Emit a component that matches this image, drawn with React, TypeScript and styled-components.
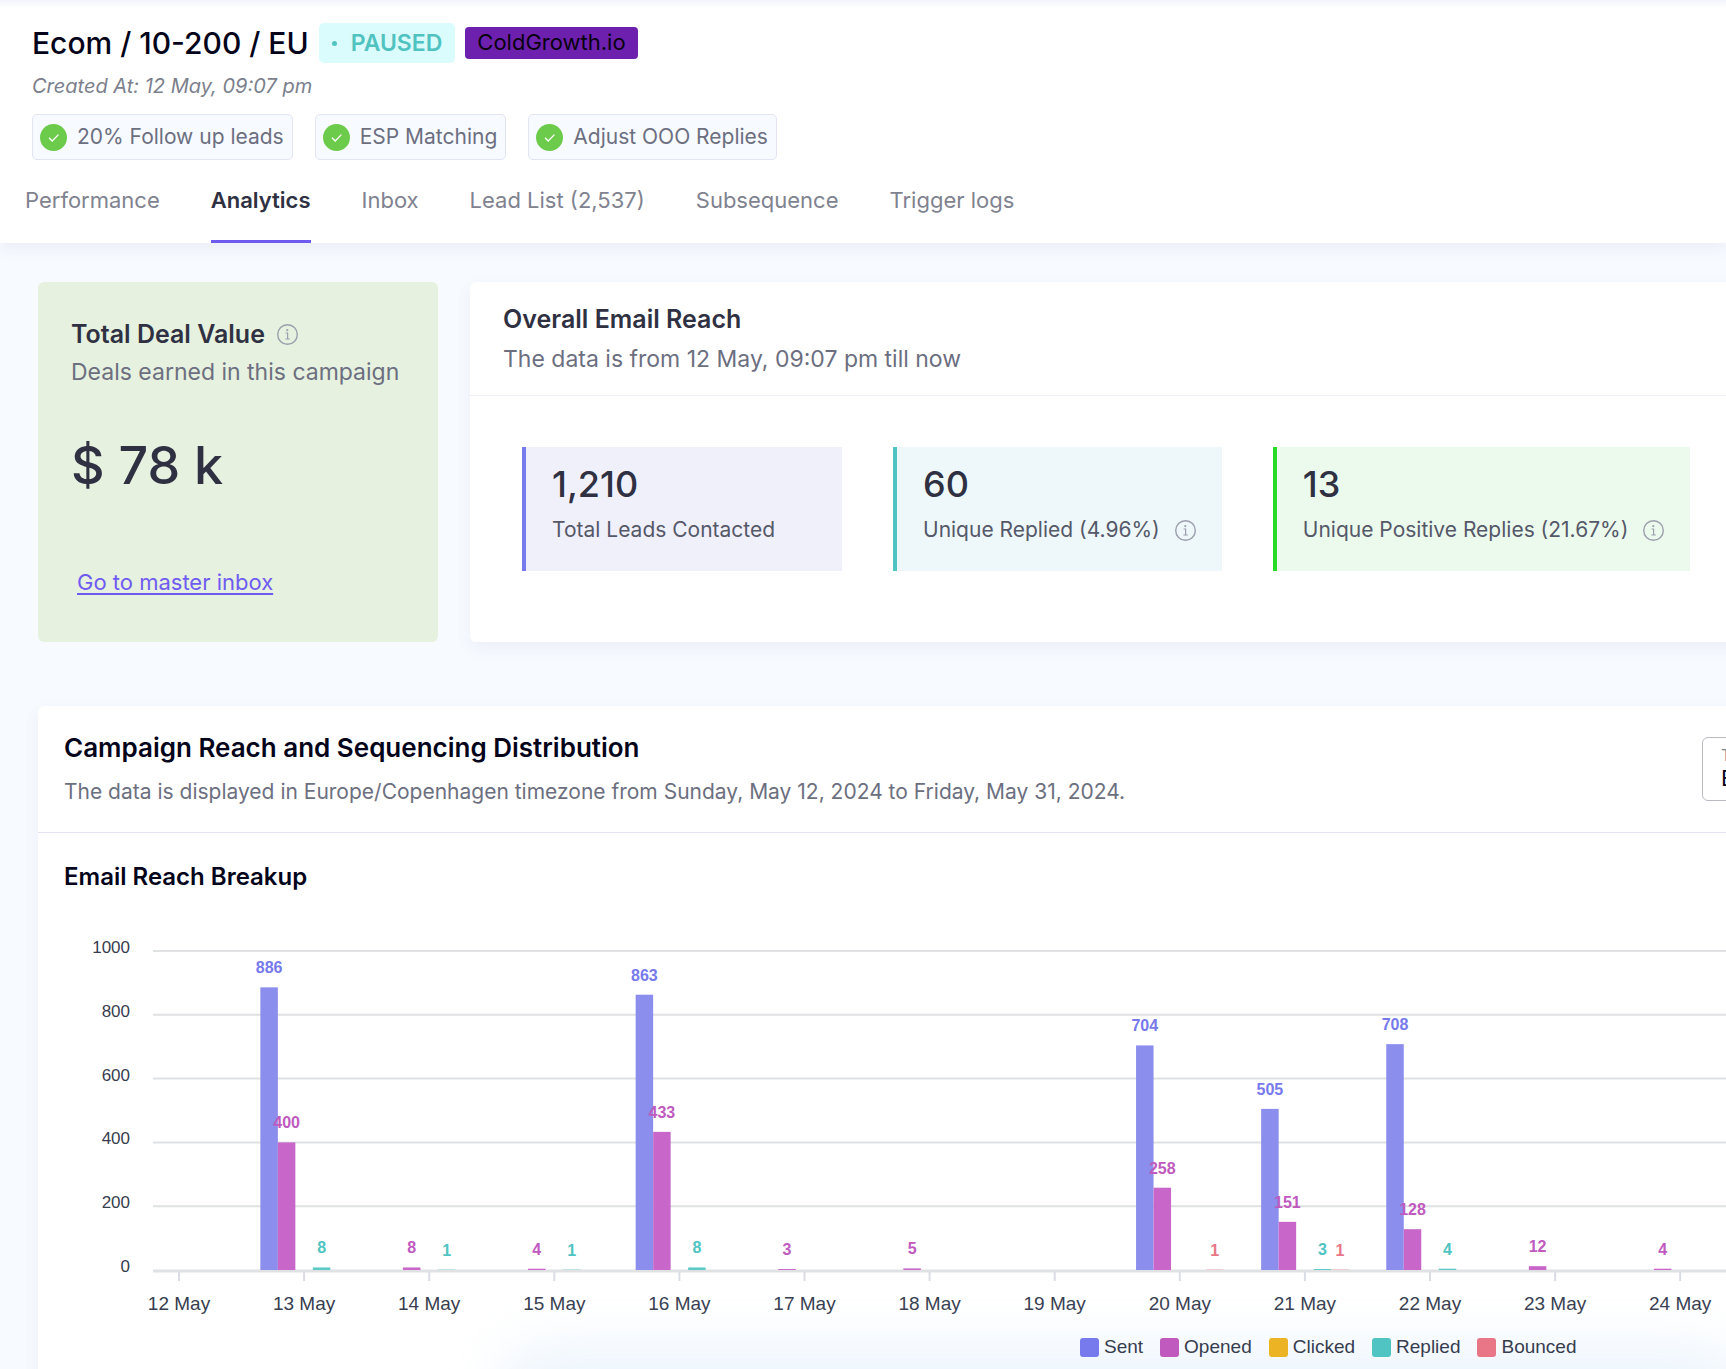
import React from 'react';
import styled, { createGlobalStyle } from 'styled-components';

const ink = '#2f3142';
const muted = '#6c6f80';
const accent = '#6f5bf0';

const GlobalStyle = createGlobalStyle`
  *, *::before, *::after { box-sizing: border-box; }
  body {
    margin: 0;
    background: #f7faff;
    color: ${ink};
    font-family: Inter, 'Liberation Sans', sans-serif;
    font-size: 22px;
    line-height: 28px;
  }
  h1, h2, h3, p, ul { margin: 0; padding: 0; }
`;

const Page = styled.div`
  position: relative;
  height: 100vh;
  overflow: hidden;
`;

/* ---------- header ---------- */

const Header = styled.header`
  background: linear-gradient(#f3f4fa, #fff 8px);
  padding: 23px 32px 0;
  box-shadow: 0 6px 14px rgba(50, 50, 80, 0.06);
`;

const TitleRow = styled.div`
  display: flex;
  align-items: center;
  height: 40px;
`;

const CampaignName = styled.h1`
  font-size: 30px;
  font-weight: 500;
  line-height: 40px;
  color: #04041a;
  margin-right: 10px;
`;

const Status = styled.span`
  display: inline-flex;
  align-items: center;
  gap: 14px;
  height: 40px;
  padding: 0 13px;
  border-radius: 5px;
  background: #dbfcfc;
  color: #50c3c1;
  font-size: 23px;
  font-weight: 600;
  margin-right: 10px;

  &::before {
    content: '';
    width: 5px;
    height: 5px;
    border-radius: 50%;
    background: currentColor;
  }
`;

const Tag = styled.span`
  height: 32px;
  line-height: 31px;
  padding: 0 12px;
  border-radius: 4px;
  background: #6d1fae;
  color: #08020f;
`;

const Created = styled.p`
  margin-top: 10px;
  font-size: 20px;
  line-height: 26px;
  font-style: italic;
  color: #7c7f8c;
`;

const Chips = styled.ul`
  display: flex;
  gap: 22px;
  margin-top: 15px;
  list-style: none;
`;

const Chip = styled.li`
  display: flex;
  align-items: center;
  gap: 10px;
  height: 46px;
  padding: 0 8px 0 7px;
  border: 1px solid #e3e4f3;
  border-radius: 5px;
  background: #f7faff;
  font-size: 21px;
  color: ${muted};
`;

const Tabs = styled.nav`
  display: flex;
  gap: 51px;
  margin: 26px 0 0 -7px;
`;

const Tab = styled.button<{ $active?: boolean }>`
  padding: 0 0 26px;
  border: 0;
  border-bottom: 3px solid ${p => (p.$active ? accent : 'transparent')};
  background: none;
  font: inherit;
  font-weight: ${p => (p.$active ? 600 : 400)};
  color: ${p => (p.$active ? ink : '#7f828f')};
  cursor: pointer;
`;

/* ---------- content ---------- */

const Content = styled.main`
  width: calc(100% + 240px);
  padding: 39px 38px;
`;

const Overview = styled.div`
  display: flex;
  gap: 32px;
  margin-bottom: 64px;
`;

const DealCard = styled.section`
  flex: none;
  width: 400px;
  padding: 36px 34px 46px 33px;
  border-radius: 6px;
  background: #e6f1df;
`;

const CardTitle = styled.h2`
  display: flex;
  align-items: center;
  gap: 12px;
  font-size: 25px;
  font-weight: 600;
  line-height: 32px;
`;

const DealNote = styled.p`
  margin-top: 6px;
  line-height: 32px;
  font-size: 23px;
  color: ${muted};
`;

const DealValue = styled.p`
  margin-top: 48px;
  font-size: 52px;
  font-weight: 500;
  line-height: 60px;
`;

const InboxLink = styled.a`
  display: inline-block;
  margin: 72px 0 0 6px;
  color: ${accent};
  text-decoration: underline;
  text-decoration-thickness: 2px;
  text-underline-offset: 3px;
`;

const Card = styled.section`
  flex: 1;
  min-width: 0;
  border-radius: 6px;
  background: #fff;
  box-shadow: 0 6px 18px rgba(50, 50, 80, 0.06);
`;

const ReachHead = styled.div`
  padding: 21px 33px 22px;
  border-bottom: 1px solid #eff0f6;
`;

const ReachNote = styled.p`
  margin-top: 10px;
  font-size: 23px;
  color: ${muted};
`;

const Stats = styled.div`
  display: flex;
  gap: 51px;
  padding: 51px 52px;
`;

const Stat = styled.div<{ $line: string; $fill: string }>`
  min-width: 320px;
  padding: 15px 26px 27px;
  border-left: 4px solid ${p => p.$line};
  background: ${p => p.$fill};
`;

const StatValue = styled.p`
  font-size: 36px;
  font-weight: 500;
  line-height: 44px;
`;

const StatLabel = styled.p`
  display: flex;
  align-items: center;
  gap: 15px;
  margin-top: 10px;
  font-size: 21px;
  color: #555869;
  white-space: nowrap;
`;

const SectionHead = styled.div`
  display: flex;
  align-items: center;
  justify-content: space-between;
  padding: 26px 26px;
  border-bottom: 1px solid #e4e4f2;
`;

const SectionTitle = styled.h2`
  font-size: 26px;
  font-weight: 600;
  line-height: 32px;
  color: #04041a;
`;

const SectionNote = styled.p`
  margin-top: 14px;
  font-size: 21px;
  color: ${muted};
`;

const Field = styled.div`
  display: flex;
  flex-direction: column;
  width: 200px;
  height: 64px;
  padding: 8px 18px;
  border: 1px solid #b9bac2;
  border-radius: 6px;
`;

const FieldLabel = styled.label`
  font-size: 16px;
  line-height: 18px;
  color: #7f828f;
`;

const FieldSelect = styled.select`
  appearance: none;
  padding: 0;
  border: 0;
  background: none;
  font: inherit;
  line-height: 28px;
  color: #04041a;
`;

const ChartTitle = styled.h3`
  padding: 29px 26px 0;
  font-size: 24px;
  font-weight: 600;
  line-height: 30px;
  color: #04041a;
`;

const Plot = styled.svg`
  display: block;
  width: 100%;
  height: 433px;
  font-family: 'Liberation Sans', sans-serif;
`;

const AxisText = styled.text<{ $size: number }>`
  font-size: ${p => p.$size}px;
  fill: #373d4f;
`;

const ValueText = styled.text`
  font-size: 16px;
  font-weight: 700;
`;

const Legend = styled.ul`
  position: relative;
  z-index: 1;
  display: flex;
  gap: 17px;
  margin: 0;
  padding: 11px 0 60px 1042px;
  list-style: none;
  font: 19px/22px 'Liberation Sans', sans-serif;
  color: #373d4f;
`;

const LegendItem = styled.li<{ $color: string }>`
  display: flex;
  align-items: center;
  gap: 5px;

  &::before {
    content: '';
    width: 19px;
    height: 19px;
    border-radius: 3px;
    background: ${p => p.$color};
  }
`;

const BottomGlow = styled.div`
  position: absolute;
  left: 520px;
  right: 0;
  bottom: -60px;
  height: 60px;
  border-radius: 30px;
  box-shadow: 0 0 50px 24px rgba(215, 232, 250, 0.45);
  pointer-events: none;
`;

const CheckIcon = () => (
  <svg width="27" height="27" viewBox="0 0 27 27" aria-hidden="true">
    <circle cx="13.5" cy="13.5" r="13.5" fill="#6ccb4b" />
    <path d="M9 13.8l3.2 3.2 6.2-6.4" fill="none" stroke="#fff" strokeWidth="1.3" />
  </svg>
);

const InfoIcon = () => (
  <svg width="21" height="21" viewBox="0 0 21 21" aria-hidden="true" fill="none" stroke="#9c9fad">
    <circle cx="10.5" cy="10.5" r="9.8" strokeWidth="1.4" />
    <circle cx="10.3" cy="6.1" r="1.1" fill="#9c9fad" stroke="none" />
    <path d="M8.6 9h2v6M8.4 15h4.4" strokeWidth="1.2" />
  </svg>
);

/* ---------- chart ---------- */

const series = [
  { name: 'Sent', legend: '#777aec', bar: '#8b8eed' },
  { name: 'Opened', legend: '#c05abf', bar: '#c867c9' },
  { name: 'Clicked', legend: '#ecb424', bar: '#eebc3f' },
  { name: 'Replied', legend: '#50c4c2', bar: '#5dc9c7' },
  { name: 'Bounced', legend: '#e87686', bar: '#ea8694' },
];

// Values in series order; zero means no bar and no label.
const days: [string, number[]][] = [
  ['12 May', [0, 0, 0, 0, 0]],
  ['13 May', [886, 400, 0, 8, 0]],
  ['14 May', [0, 8, 0, 1, 0]],
  ['15 May', [0, 4, 0, 1, 0]],
  ['16 May', [863, 433, 0, 8, 0]],
  ['17 May', [0, 3, 0, 0, 0]],
  ['18 May', [0, 5, 0, 0, 0]],
  ['19 May', [0, 0, 0, 0, 0]],
  ['20 May', [704, 258, 0, 0, 1]],
  ['21 May', [505, 151, 0, 3, 1]],
  ['22 May', [708, 128, 0, 4, 0]],
  ['23 May', [0, 12, 0, 0, 0]],
  ['24 May', [0, 4, 0, 0, 0]],
];

const ORIGIN = 115;
const FIRST_DAY = 141;
const DAY_STEP = 125.1;
const BAR = 17.5;
const BASE = 378;
const scale = (v: number) => (v * 319) / 1000;

const ReachChart = () => (
  <Plot role="img" aria-label="Emails sent, opened, clicked, replied and bounced per day">
    {[1000, 800, 600, 400, 200, 0].map(v => (
      <g key={v}>
        <line x1={ORIGIN} x2="100%" y1={BASE + (v ? 0 : 1) - scale(v)} y2={BASE + (v ? 0 : 1) - scale(v)} stroke="#e0e1e3" strokeWidth={v ? 2 : 3} />
        <AxisText $size={17} x={92} y={BASE - scale(v) + 2} textAnchor="end">{v}</AxisText>
      </g>
    ))}
    {days.map(([day, values], d) => {
      const x = FIRST_DAY + d * DAY_STEP;
      return (
        <g key={day}>
          <line x1={x} x2={x} y1={BASE + 2} y2={BASE + 11} stroke="#dcdde4" strokeWidth="2" />
          <AxisText $size={19} x={x} y={BASE + 40} textAnchor="middle">{day}</AxisText>
          {values.map((v, s) => v > 0 && (
            <rect
              key={s}
              x={x + (s - 2.5) * BAR}
              y={BASE - scale(v)}
              width={BAR}
              height={scale(v)}
              fill={series[s].bar}
            />
          ))}
          {values.map((v, s) => v > 0 && (
            <ValueText
              key={s}
              x={x + (s - 2) * BAR}
              y={BASE - 14 - scale(v)}
              textAnchor="middle"
              fill={series[s].legend}
            >
              {v}
            </ValueText>
          ))}
        </g>
      );
    })}
  </Plot>
);

export default function App() {
  return (
    <Page>
      <GlobalStyle />
      <Header>
        <TitleRow>
          <CampaignName>Ecom / 10-200 / EU</CampaignName>
          <Status>PAUSED</Status>
          <Tag>ColdGrowth.io</Tag>
        </TitleRow>
        <Created>Created At: 12 May, 09:07 pm</Created>
        <Chips>
          {['20% Follow up leads', 'ESP Matching', 'Adjust OOO Replies'].map(text => (
            <Chip key={text}><CheckIcon />{text}</Chip>
          ))}
        </Chips>
        <Tabs>
          {['Performance', 'Analytics', 'Inbox', 'Lead List (2,537)', 'Subsequence', 'Trigger logs'].map(name => (
            <Tab key={name} type="button" $active={name === 'Analytics'}>{name}</Tab>
          ))}
        </Tabs>
      </Header>

      <Content>
        <Overview>
          <DealCard>
            <CardTitle>Total Deal Value <InfoIcon /></CardTitle>
            <DealNote>Deals earned in this campaign</DealNote>
            <DealValue>$ 78 k</DealValue>
            <InboxLink href="#inbox">Go to master inbox</InboxLink>
          </DealCard>
          <Card>
            <ReachHead>
              <CardTitle>Overall Email Reach</CardTitle>
              <ReachNote>The data is from 12 May, 09:07 pm till now</ReachNote>
            </ReachHead>
            <Stats>
              <Stat $line="#777aec" $fill="#f0f0fb">
                <StatValue>1,210</StatValue>
                <StatLabel>Total Leads Contacted</StatLabel>
              </Stat>
              <Stat $line="#50c4c2" $fill="#eef7f9">
                <StatValue>60</StatValue>
                <StatLabel>Unique Replied (4.96%) <InfoIcon /></StatLabel>
              </Stat>
              <Stat $line="#27dc27" $fill="#ecfaed">
                <StatValue>13</StatValue>
                <StatLabel>Unique Positive Replies (21.67%) <InfoIcon /></StatLabel>
              </Stat>
            </Stats>
          </Card>
        </Overview>

        <Card>
          <SectionHead>
            <div>
              <SectionTitle>Campaign Reach and Sequencing Distribution</SectionTitle>
              <SectionNote>
                The data is displayed in Europe/Copenhagen timezone from Sunday, May 12, 2024 to Friday, May 31, 2024.
              </SectionNote>
            </div>
            <Field>
              <FieldLabel htmlFor="timezone">Timezone</FieldLabel>
              <FieldSelect id="timezone" defaultValue="cph">
                <option value="cph">Europe/Copenhagen</option>
              </FieldSelect>
            </Field>
          </SectionHead>
          <ChartTitle>Email Reach Breakup</ChartTitle>
          <ReachChart />
          <Legend>
            {series.map(s => <LegendItem key={s.name} $color={s.legend}>{s.name}</LegendItem>)}
          </Legend>
        </Card>
      </Content>
      <BottomGlow />
    </Page>
  );
}
